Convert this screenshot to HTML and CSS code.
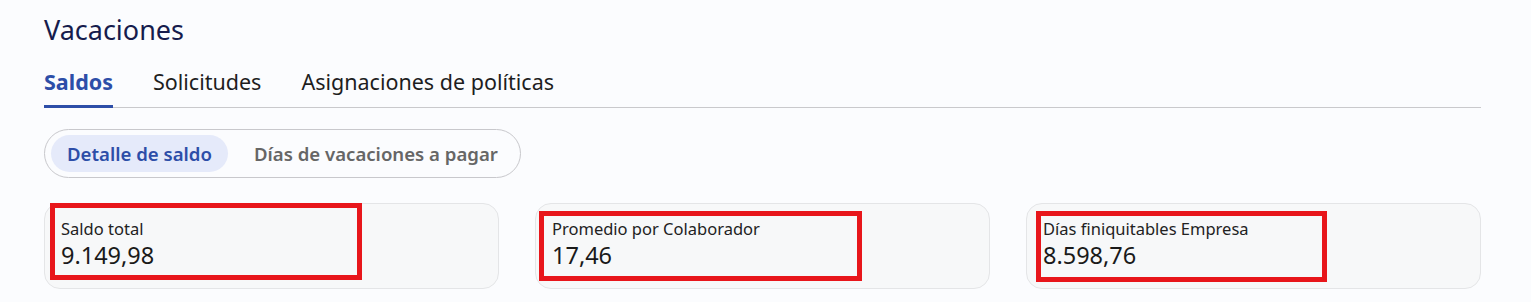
FILE: index.html
```html
<!DOCTYPE html>
<html lang="es">
<head>
    <meta charset="UTF-8">
    <meta name="viewport" content="width=device-width, initial-scale=1.0">
    <title>Vacaciones</title>
    <link rel="stylesheet" href="styles.css">
</head>
<body>
    <div class="page">
        <h1 class="page-title">Vacaciones</h1>

        <div class="tabs">
            <div class="tab active">Saldos</div>
            <div class="tab">Solicitudes</div>
            <div class="tab">Asignaciones de políticas</div>
        </div>

        <div class="segmented">
            <div class="segment active">Detalle de saldo</div>
            <div class="segment">Días de vacaciones a pagar</div>
        </div>

        <div class="cards">
            <div class="card">
                <div class="card-label">Saldo total</div>
                <div class="card-value">9.149,98</div>
                <div class="mark mark-1"></div>
            </div>
            <div class="card">
                <div class="card-label">Promedio por Colaborador</div>
                <div class="card-value">17,46</div>
                <div class="mark mark-2"></div>
            </div>
            <div class="card">
                <div class="card-label">Días finiquitables Empresa</div>
                <div class="card-value">8.598,76</div>
                <div class="mark mark-3"></div>
            </div>
        </div>
    </div>
</body>
</html>
```

FILE: styles.css
```css
body {
    margin: 0;
    background-color: #fbfcfe;
    font-family: "Noto Sans", "Open Sans", sans-serif;
    color: #222;
}
.page {
    padding: 12px 50px 0 44px;
}
.page-title {
    margin: 0;
    font-size: 27px;
    font-weight: 400;
    line-height: 36px;
    color: #161c4d;
}
.tabs {
    display: flex;
    gap: 40px;
    margin-top: 19px;
    border-bottom: 1px solid #c9c9cc;
}
.tab {
    font-size: 21.5px;
    line-height: 30px;
    padding-bottom: 8px;
    color: #1e1e1e;
    border-bottom: 3px solid transparent;
    margin-bottom: -1px;
}
.tab.active {
    color: #2d4ea8;
    font-weight: 700;
    border-bottom-color: #2d4ea8;
}
.segmented {
    display: inline-flex;
    gap: 10px;
    margin-top: 21px;
    padding: 5px 6px;
    border: 1px solid #c8c8cc;
    border-radius: 25px;
}
.segment {
    font-size: 18.6px;
    font-weight: 600;
    line-height: 37px;
    padding: 0 16px;
    border-radius: 19px;
    color: #666;
}
.segment.active {
    background-color: #e5eafa;
    color: #2d4ea8;
}
.cards {
    display: flex;
    gap: 36px;
    margin-top: 25px;
}
.card {
    position: relative;
    flex: 1;
    background-color: #f7f8f9;
    border: 1px solid #e4e5e7;
    border-radius: 16px;
    padding: 14px 16px 18px;
}
.card-label {
    font-size: 16.5px;
    line-height: 22px;
    color: #222;
}
.card-value {
    font-size: 23.5px;
    line-height: 30px;
    color: #1a1a1a;
}
.mark {
    position: absolute;
    border: 5px solid #e8161b;
    box-sizing: border-box;
}
.mark-1 {
    left: 5px;
    top: -1px;
    width: 312px;
    height: 77px;
}
.mark-2 {
    left: 3px;
    top: 7px;
    width: 323px;
    height: 70px;
}
.mark-3 {
    left: 9px;
    top: 7px;
    width: 291px;
    height: 71px;
}
```
